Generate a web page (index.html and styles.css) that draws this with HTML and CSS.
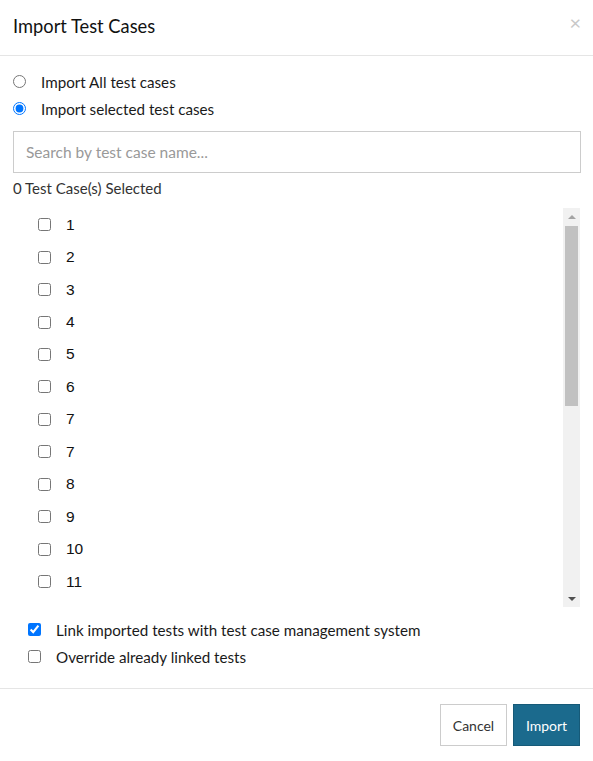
FILE: index.html
```html
<!DOCTYPE html>
<html>
<head>
<meta charset="utf-8">
<link rel="stylesheet" href="styles.css">
</head>
<body>
<div class="dialog">
  <div class="header">
    <div class="title">Import Test Cases</div>
    <div class="close">×</div>
  </div>
  <div class="body">
    <label class="radio-row"><input type="radio" name="mode"><span>Import All test cases</span></label>
    <label class="radio-row"><input type="radio" name="mode" checked><span>Import selected test cases</span></label>
    <input class="search" type="text" placeholder="Search by test case name...">
    <div class="count">0 Test Case(s) Selected</div>
    <div class="listbox">
      <div class="list">
        <label class="item"><input type="checkbox"><span>1</span></label>
        <label class="item"><input type="checkbox"><span>2</span></label>
        <label class="item"><input type="checkbox"><span>3</span></label>
        <label class="item"><input type="checkbox"><span>4</span></label>
        <label class="item"><input type="checkbox"><span>5</span></label>
        <label class="item"><input type="checkbox"><span>6</span></label>
        <label class="item"><input type="checkbox"><span>7</span></label>
        <label class="item"><input type="checkbox"><span>7</span></label>
        <label class="item"><input type="checkbox"><span>8</span></label>
        <label class="item"><input type="checkbox"><span>9</span></label>
        <label class="item"><input type="checkbox"><span>10</span></label>
        <label class="item"><input type="checkbox"><span>11</span></label>
        <label class="item"><input type="checkbox"><span>12</span></label>
      </div>
      <div class="scrollbar">
        <div class="arrow up"></div>
        <div class="track"><div class="thumb"></div></div>
        <div class="arrow down"></div>
      </div>
    </div>
    <div class="options">
      <label class="opt"><input type="checkbox" checked><span>Link imported tests with test case management system</span></label>
      <label class="opt"><input type="checkbox"><span>Override already linked tests</span></label>
    </div>
  </div>
  <div class="footer">
    <button class="btn cancel">Cancel</button>
    <button class="btn primary">Import</button>
  </div>
</div>
</body>
</html>
```

FILE: styles.css
```css
* { box-sizing: border-box; }
html, body { margin: 0; padding: 0; background: #fff; }
body { font-family: Lato, "Open Sans", sans-serif; color: #222; }

.dialog { width: 593px; }

.header {
  height: 56px;
  border-bottom: 1px solid #e5e5e5;
  display: flex;
  align-items: center;
  justify-content: space-between;
  padding: 0 13px 4px 13px;
}
.title { font-size: 18.3px; color: #111; }
.close { font-size: 20px; color: #c8c8c8; line-height: 1; margin-right: -1px; margin-top: -7px; }

.body { padding: 12px 13px 0 13px; }

.radio-row {
  display: flex;
  align-items: center;
  height: 27px;
  font-size: 15.2px;
  color: #1a1a1a;
}
.radio-row input { margin: 0; width: 13px; height: 13px; }
.radio-row span { margin-left: 15px; }

.search {
  display: block;
  width: 568px;
  height: 42px;
  margin-top: 9px;
  border: 1px solid #ccc;
  padding: 0 12px;
  font-family: Lato, sans-serif;
  font-size: 15.5px;
  color: #333;
  outline: none;
}
.search::placeholder { color: #999; }

.count { font-size: 15px; color: #333; margin-top: 5px; height: 20px; line-height: 20px; }

.listbox {
  display: flex;
  height: 399px;
  margin-top: 10px;
}
.list { flex: 1; overflow: hidden; padding-left: 25px; padding-top: 0.5px; }
.item {
  display: flex;
  align-items: center;
  height: 32.45px;
  font-family: "Liberation Sans", Arial, sans-serif;
  font-size: 15.5px;
  color: #111;
}
.item input { margin: 0; width: 13px; height: 13px; }
.item span { margin-left: 15px; }

.scrollbar {
  width: 17px;
  background: #f1f1f1;
  display: flex;
  flex-direction: column;
}
.arrow { height: 17px; display: flex; align-items: center; justify-content: center; }
.arrow.up::before {
  content: "";
  border-left: 4px solid transparent;
  border-right: 4px solid transparent;
  border-bottom: 4px solid #a3a3a3;
}
.arrow.down::before {
  content: "";
  border-left: 4px solid transparent;
  border-right: 4px solid transparent;
  border-top: 4px solid #505050;
}
.track { flex: 1; padding: 1px 2px 0 2px; }
.thumb { height: 180px; background: #c1c1c1; }

.options { padding: 9px 0 0 15px; }
.opt {
  display: flex;
  align-items: center;
  height: 27px;
  font-size: 15.2px;
  color: #1a1a1a;
}
.opt input { margin: 0; width: 13px; height: 13px; }
.opt span { margin-left: 15px; }

.footer {
  margin-top: 18px;
  border-top: 1px solid #e5e5e5;
  display: flex;
  justify-content: flex-end;
  gap: 6px;
  padding: 15px 13px 0 0;
}
.btn {
  height: 42px;
  width: 67px;
  font-family: Lato, sans-serif;
  font-size: 14px;
  border: 1px solid #ccc;
  background: #fff;
  color: #333;
  padding: 0;
}
.btn.primary {
  background: #1b6a8d;
  border-color: #165a78;
  color: #fff;
}
```
